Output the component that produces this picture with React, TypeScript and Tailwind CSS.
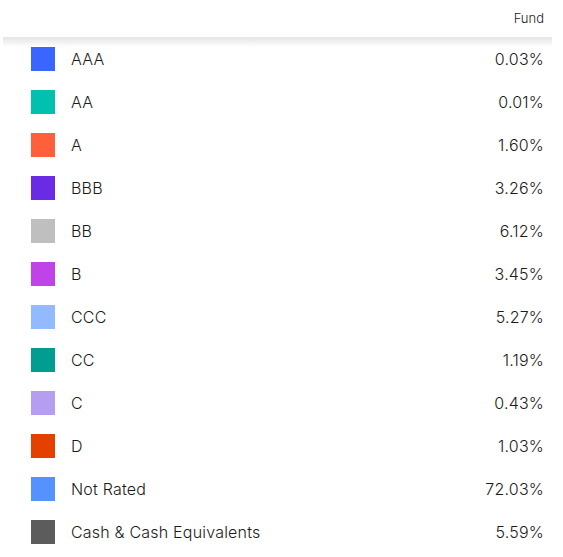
const rows = [
  { label: "AAA", value: "0.03%", color: "bg-[#3a66ff]" },
  { label: "AA", value: "0.01%", color: "bg-[#00c1b0]" },
  { label: "A", value: "1.60%", color: "bg-[#ff5f3a]" },
  { label: "BBB", value: "3.26%", color: "bg-[#692ce4]" },
  { label: "BB", value: "6.12%", color: "bg-[#bfbfbf]" },
  { label: "B", value: "3.45%", color: "bg-[#c043e9]" },
  { label: "CCC", value: "5.27%", color: "bg-[#93b9ff]" },
  { label: "CC", value: "1.19%", color: "bg-[#009d90]" },
  { label: "C", value: "0.43%", color: "bg-[#b59df1]" },
  { label: "D", value: "1.03%", color: "bg-[#e44000]" },
  { label: "Not Rated", value: "72.03%", color: "bg-[#5592ff]" },
  { label: "Cash & Cash Equivalents", value: "5.59%", color: "bg-[#5c5c5c]" },
];

export default function App() {
  return (
    <div
      className="w-[563px] h-[557px] bg-white text-[#1b1b1b] overflow-hidden"
      style={{ fontFamily: "Inter, 'Noto Sans', sans-serif" }}
    >
      {/* header */}
      <div className="h-[37px] flex items-center justify-end pr-[19px] text-[13px] font-light">
        Fund
      </div>

      <div className="relative">
        {/* sticky header shadow */}
        <div className="absolute top-0 left-[3px] right-[11px] h-[10px] bg-gradient-to-b from-[#e4e4e4] to-white" />

        {rows.map((r) => (
          <div
            key={r.label}
            className="h-[43px] flex items-center pl-[31px] pr-[19px] text-[16px] font-light tracking-[0.2px]"
          >
            <div className={`w-[24px] h-[24px] ${r.color}`} />
            <span className="ml-[16px]">{r.label}</span>
            <span className="ml-auto">{r.value}</span>
          </div>
        ))}
      </div>
    </div>
  );
}
